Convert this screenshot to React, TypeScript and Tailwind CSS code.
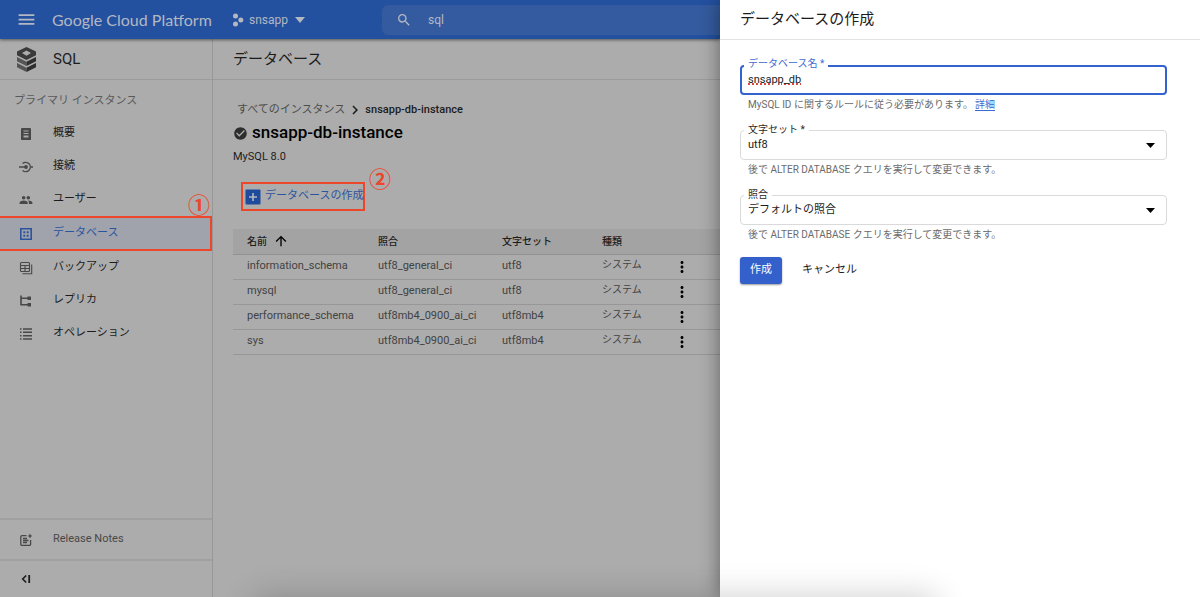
import type { ReactNode } from "react";
import {
  MdArrowUpward,
  MdCheckCircle,
  MdChevronRight,
  MdMenu,
  MdMoreVert,
  MdPeople,
  MdSearch,
} from "react-icons/md";

const navItems = [
  { label: "概要", icon: <OverviewIcon /> },
  { label: "接続", icon: <ConnectionIcon /> },
  { label: "ユーザー", icon: <MdPeople size={14} /> },
  { label: "データベース", icon: <DatabaseIcon />, active: true },
  { label: "バックアップ", icon: <BackupIcon /> },
  { label: "レプリカ", icon: <ReplicaIcon /> },
  { label: "オペレーション", icon: <OperationsIcon /> },
];

const databases = [
  { name: "information_schema", collation: "utf8_general_ci", charset: "utf8" },
  { name: "mysql", collation: "utf8_general_ci", charset: "utf8" },
  { name: "performance_schema", collation: "utf8mb4_0900_ai_ci", charset: "utf8mb4" },
  { name: "sys", collation: "utf8mb4_0900_ai_ci", charset: "utf8mb4" },
];

export default function App() {
  return (
    <div className="relative flex min-h-screen overflow-hidden bg-[#acacac] font-['Roboto','Noto_Sans_CJK_JP',sans-serif] text-[11px] text-[#1c1c1c]">
      <div className="flex min-w-0 flex-1 flex-col">
        <TopBar />
        <div className="flex flex-1">
          <Sidebar />
          <Main />
        </div>
      </div>
      <Drawer />
      <div className="pointer-events-none absolute top-full right-[265px] left-[255px] h-10 rounded-lg shadow-[0_0_32px_2px_rgba(0,0,0,0.18)]" />
    </div>
  );
}

function TopBar() {
  return (
    <header className="relative flex h-[39px] items-center bg-[#23509f] text-[#b3b8c2] shadow-[0_1px_3px_rgba(0,0,0,0.5)]">
      <button aria-label="メニュー" className="ml-4">
        <MdMenu size={21} />
      </button>
      <span className="ml-[15px] w-[180px] font-['Lato',sans-serif] text-[16px] whitespace-nowrap">
        Google Cloud Platform
      </span>
      <button className="flex items-center gap-[5px] text-[12px]">
        <svg width="12" height="14" viewBox="0 0 12 14" fill="currentColor">
          <circle cx="3.5" cy="3" r="2.5" />
          <circle cx="8.8" cy="7" r="2.5" />
          <circle cx="3.5" cy="11" r="2.5" />
        </svg>
        snsapp
        <svg className="ml-[2px]" width="10" height="6" viewBox="0 0 10 6" fill="currentColor">
          <path d="M0 0h10L5 6z" />
        </svg>
      </button>
      <label className="ml-auto flex h-[30px] w-[338px] items-center gap-4 rounded-l-md bg-[#345b9f] pl-[14px]">
        <MdSearch size={16} />
        <input
          aria-label="検索"
          defaultValue="sql"
          className="min-w-0 flex-1 bg-transparent text-[12px] outline-none"
        />
      </label>
    </header>
  );
}

function Sidebar() {
  return (
    <aside className="flex w-[213px] shrink-0 flex-col border-r border-[#989898]">
      <div className="flex h-[41px] items-center gap-4 border-b border-[#9b9b9b] pl-4 text-[15px]">
        <SqlLogo />
        SQL
      </div>
      <p className="mt-[13px] mb-2 pl-[14px] leading-4 text-[#595959]">
        プライマリ インスタンス
      </p>
      <nav>
        {navItems.map((item) =>
          item.active ? (
            <a
              key={item.label}
              href="#"
              aria-current="page"
              className="relative flex h-[35px] items-center gap-5 border-2 border-l-0 border-[#ec472b] bg-[#a0a3ac] pl-[19px] text-[#2b549f]"
            >
              {item.icon}
              {item.label}
              <Marker className="-top-[27px] right-0">①</Marker>
            </a>
          ) : (
            <a key={item.label} href="#" className="flex h-[33px] items-center gap-5 pl-[19px]">
              <span className="text-[#484848]">{item.icon}</span>
              {item.label}
            </a>
          ),
        )}
      </nav>
      <div className="mt-auto">
        <a
          href="#"
          className="flex h-[41px] items-center gap-5 border-t-2 border-[#a0a0a0] pl-[19px] text-[#484848]"
        >
          <ReleaseNotesIcon />
          Release Notes
        </a>
        <div className="flex h-[38px] items-center border-t-2 border-[#a0a0a0] pl-5">
          <button aria-label="メニューを閉じる">
            <svg width="12" height="10" viewBox="0 0 12 10" fill="none" stroke="currentColor">
              <path d="M6.2 1.5 2.7 5l3.5 3.5" strokeWidth="1.6" />
              <path d="M9.2 1v8" strokeWidth="1.8" />
            </svg>
          </button>
        </div>
      </div>
    </aside>
  );
}

function Main() {
  return (
    <main className="min-w-0 flex-1">
      <h1 className="flex h-[41px] items-center border-b border-[#9b9b9b] pl-5 text-[15px]">
        データベース
      </h1>
      <div className="pl-5">
        <div className="mt-[22px] flex h-4 items-center pl-1">
          <a href="#" className="text-[#4c4c4c]">
            すべてのインスタンス
          </a>
          <MdChevronRight size={18} className="mx-px" />
          <span className="font-medium">snsapp-db-instance</span>
        </div>
        <h2 className="mt-[3px] flex h-6 items-center gap-1 text-[17px] font-medium text-black">
          <MdCheckCircle size={15} className="text-[#2e2e2e]" />
          snsapp-db-instance
        </h2>
        <p className="mt-1 leading-4">MySQL 8.0</p>
        <div className="relative mt-[17px] ml-2 w-[124px]">
          <button className="flex h-[29px] w-full items-center gap-1 border-2 border-[#ec472b] pl-[2px] whitespace-nowrap text-[#2b549f]">
            <svg className="shrink-0" width="16" height="16" viewBox="0 0 16 16">
              <rect x="0.5" y="0.5" width="15" height="15" rx="1" fill="#1f4b9c" />
              <path d="M8 4v8M4 8h8" stroke="#b4b8c0" strokeWidth="1.6" />
            </svg>
            データベースの作成
          </button>
          <Marker className="-top-[17px] -right-[26px]">②</Marker>
        </div>
        <table className="mt-[18px] w-full table-fixed text-left text-[#424242]">
          <thead>
            <tr className="h-[25px] border-b border-[#929292] bg-[#a3a3a3] text-[10px] text-[#1c1c1c]">
              <th className="w-[131px] pl-[14px] font-medium">
                <span className="flex items-center gap-[6px]">
                  名前
                  <MdArrowUpward size={16} className="text-black" />
                </span>
              </th>
              <th className="w-[124px] pl-[14px] font-medium">照合</th>
              <th className="w-[100px] pl-[14px] font-medium">文字セット</th>
              <th className="w-[80px] pl-[14px] font-medium">種類</th>
              <th aria-label="操作" />
            </tr>
          </thead>
          <tbody>
            {databases.map((db) => (
              <tr key={db.name} className="h-[25px] border-b border-[#979797]">
                <td className="pl-[14px]">{db.name}</td>
                <td className="pl-[14px]">{db.collation}</td>
                <td className="pl-[14px]">{db.charset}</td>
                <td className="pb-1 pl-[14px] text-[10px]">システム</td>
                <td className="pl-[5px]">
                  <button aria-label="その他" className="block text-black">
                    <MdMoreVert size={18} />
                  </button>
                </td>
              </tr>
            ))}
          </tbody>
        </table>
      </div>
    </main>
  );
}

function Drawer() {
  return (
    <section className="relative w-2/5 shrink-0 bg-white shadow-[0_0_18px_rgba(0,0,0,0.45)]">
      <h2 className="flex h-10 items-center border-b border-[#e3e3e3] pl-5 text-[15px]">
        データベースの作成
      </h2>
      <form className="pt-[25px] pr-[33px] pl-5">
        <div className="relative">
          <label
            htmlFor="db-name"
            className="absolute -top-[7px] left-1 bg-white px-1 text-[10px] leading-3 text-[#3f6ad0]"
          >
            データベース名 *
          </label>
          <input
            id="db-name"
            defaultValue="snsapp_db"
            spellCheck={false}
            className="block h-[30px] w-full rounded border-2 border-[#3462cf] px-[6px] pb-[2px] underline decoration-[#e0443a] decoration-dotted decoration-2 outline-none"
          />
        </div>
        <p className="mt-[2px] pl-2 text-[10px] leading-4 text-[#6b6b6b]">
          MySQL ID に関するルールに従う必要があります。
          <a href="#" className="ml-[2px] border-b border-[#3f6ad0] text-[#3f6ad0]">
            詳細
          </a>
        </p>
        <SelectField id="charset" label="文字セット *" value="utf8" />
        <SelectField id="collation" label="照合" value="デフォルトの照合" />
        <div className="mt-[14px] flex items-center gap-5">
          <button
            type="button"
            className="h-[27px] w-[42px] rounded-[3px] bg-[#3360cb] text-white shadow-[0_1px_2px_rgba(0,0,0,0.4)]"
          >
            作成
          </button>
          <button type="button">キャンセル</button>
        </div>
      </form>
    </section>
  );
}

function SelectField({ id, label, value }: { id: string; label: string; value: string }) {
  return (
    <div className="mt-[17px]">
      <div className="relative">
        <label
          htmlFor={id}
          className="absolute -top-[6px] left-1 bg-white px-1 text-[10px] leading-3 text-[#2a2a2a]"
        >
          {label}
        </label>
        <select
          id={id}
          className="block h-[30px] w-full appearance-none rounded border border-[#dadada] px-[7px] outline-none"
        >
          <option>{value}</option>
        </select>
        <svg
          className="pointer-events-none absolute top-[13px] right-3"
          width="9"
          height="5"
          viewBox="0 0 9 5"
        >
          <path d="M0 0h9L4.5 5z" />
        </svg>
      </div>
      <p className="mt-[2px] pl-2 text-[10px] leading-4 text-[#6b6b6b]">
        後で ALTER DATABASE クエリを実行して変更できます。
      </p>
    </div>
  );
}

function Marker({ className, children }: { className: string; children: ReactNode }) {
  return (
    <span
      className={`absolute font-['Noto_Sans_CJK_JP',sans-serif] text-[22px] leading-6 font-bold text-[#ec472b] ${className}`}
    >
      {children}
    </span>
  );
}

function SqlLogo() {
  return (
    <svg width="21" height="26" viewBox="0 0 21 26">
      <path fill="#3a3a3a" fillRule="evenodd" d="M1 5.5 10.5 1 20 5.5v3.7L10.5 14 1 9.2zm5 1.6 4.5 2.6L15 7.1l-4.5-2.5z" />
      <path fill="#555" d="m1 11 9.5 4.8V20L1 15.2zM1 17l9.5 4.8V26L1 21.2z" />
      <path fill="#2e2e2e" d="m20 11-9.5 4.8V20l9.5-4.8zM20 17l-9.5 4.8V26l9.5-4.8z" />
    </svg>
  );
}

function OverviewIcon() {
  return (
    <svg width="14" height="14" viewBox="0 0 14 14" fill="currentColor" fillRule="evenodd">
      <path d="M3 1h8a1 1 0 0 1 1 1v11H2V2a1 1 0 0 1 1-1zm1.5 2.5v1h5v-1zm0 2.5v1h5V6zm0 2.5v2h5v-2z" />
    </svg>
  );
}

function ConnectionIcon() {
  return (
    <svg width="14" height="14" viewBox="0 0 14 14" fill="none" stroke="currentColor" strokeWidth="1.4">
      <path d="M3.6 3.6A4.6 4.6 0 1 1 3.6 10.4M0 7h6M11 7h3" />
      <circle cx="7" cy="7" r="1.9" fill="currentColor" stroke="none" />
    </svg>
  );
}

function DatabaseIcon() {
  return (
    <svg width="14" height="14" viewBox="0 0 14 14" fill="currentColor">
      <path d="M1.8 1.8h10.4v10.4H1.8z" fill="none" stroke="currentColor" strokeWidth="1.6" />
      <path d="M4.3 4.3h2v2h-2zM7.7 4.3h2v2h-2zM4.3 7.7h2v2h-2zM7.7 7.7h2v2h-2z" />
    </svg>
  );
}

function BackupIcon() {
  return (
    <svg width="14" height="14" viewBox="0 0 14 14" fill="none" stroke="currentColor" strokeWidth="1.1">
      <rect x="1.5" y="1.5" width="9" height="9" rx="1" />
      <path d="M1.5 4.5h9M1.5 7.5h9M6 4.5v6M12.7 3.5v9.2H3.5" />
    </svg>
  );
}

function ReplicaIcon() {
  return (
    <svg width="14" height="14" viewBox="0 0 14 14" fill="currentColor">
      <path d="M2 1.5v9.3h7M2 4.2h7" fill="none" stroke="currentColor" strokeWidth="1.6" />
      <path d="M8.5 2.5H12V6H8.5zM8.5 9H12v3.5H8.5z" />
    </svg>
  );
}

function OperationsIcon() {
  return (
    <svg width="14" height="14" viewBox="0 0 14 14" fill="none" stroke="currentColor" strokeWidth="1.4">
      <path d="M1 2h1.5M1 5.3h1.5M1 8.7h1.5M1 12h1.5M4 2h9M4 5.3h9M4 8.7h9M4 12h9" />
    </svg>
  );
}

function ReleaseNotesIcon() {
  return (
    <svg width="14" height="14" viewBox="0 0 14 14" fill="none" stroke="currentColor" strokeWidth="1.3">
      <path d="M7.5 2.6H3a1.2 1.2 0 0 0-1.2 1.2v7.4A1.2 1.2 0 0 0 3 12.4h7.4a1.2 1.2 0 0 0 1.2-1.2V7M4 5.5h4M4 7.5h5.5M4 9.5h4" />
      <path fill="currentColor" stroke="none" d="m11 .5.8 1.7 1.7.8-1.7.8L11 5.5l-.8-1.7L8.5 3l1.7-.8z" />
    </svg>
  );
}
